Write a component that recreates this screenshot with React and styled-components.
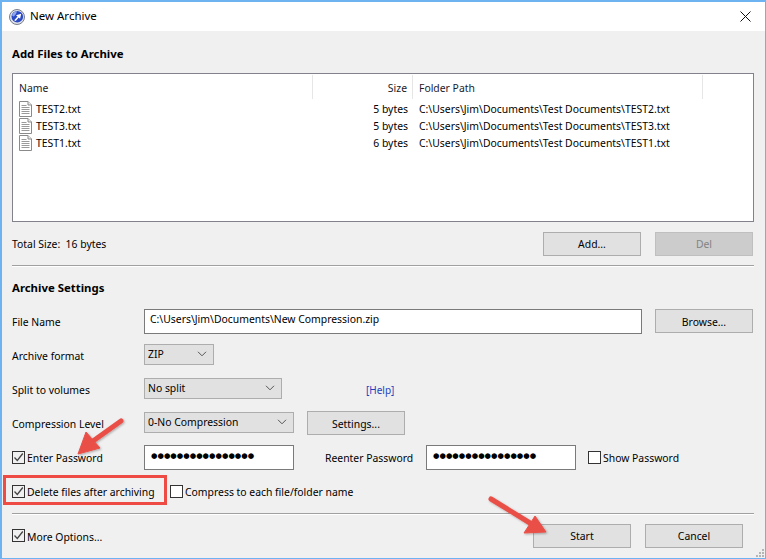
import React from 'react';
import styled, { createGlobalStyle } from 'styled-components';

const files = [
  { name: 'TEST2.txt', size: '5 bytes', path: 'C:\\Users\\Jim\\Documents\\Test Documents\\TEST2.txt' },
  { name: 'TEST3.txt', size: '5 bytes', path: 'C:\\Users\\Jim\\Documents\\Test Documents\\TEST3.txt' },
  { name: 'TEST1.txt', size: '6 bytes', path: 'C:\\Users\\Jim\\Documents\\Test Documents\\TEST1.txt' },
];

const Global = createGlobalStyle`
  html, body { margin: 0; padding: 0; background: #f0f0f0; overflow: hidden; }
  * { box-sizing: border-box; }
`;

const Window = styled.div`
  position: relative;
  width: 766px;
  height: 559px;
  display: flex;
  flex-direction: column;
  border: 1px solid #6db3f2;
  border-left-width: 2px;
  border-top-width: 2px;
  background: #f0f0f0;
  color: #000;
  font-family: "Noto Sans", "Open Sans", sans-serif;
  font-size: 10.4px;
  overflow: hidden;
`;

const TitleBar = styled.div`
  flex: none;
  height: 29px;
  background: #fff;
  display: flex;
  align-items: center;
  padding: 0 14px 0 7px;
  gap: 5px;
  font-size: 11.5px;
`;

const Title = styled.span`
  flex: 1;
  margin-top: -2px;
`;

const Body = styled.div`
  flex: 1;
  display: flex;
  flex-direction: column;
  padding: 0 11px 0 10px;
`;

const Heading = styled.div`
  height: 20px;
  display: flex;
  align-items: center;
  font-weight: 700;
  font-size: 11.4px;
  margin: ${p => p.$top}px 0 ${p => p.$bottom}px;
`;

const ListBox = styled.div`
  flex: none;
  height: 149px;
  background: #fff;
  border: 1px solid #82828c;
  padding-top: 1px;
`;

const Columns = styled.div`
  display: grid;
  grid-template-columns: 300px 100px 290px;
`;

const HeadCell = styled.div`
  height: 24px;
  display: flex;
  align-items: center;
  justify-content: ${p => (p.$right ? 'flex-end' : 'flex-start')};
  padding: 2px 5px 0 6px;
  border-right: 1px solid #e6e6e6;
  color: #1a1a2a;
`;

const Rows = styled.div`
  padding-top: 1px;
`;

const Cell = styled.div`
  height: 17px;
  display: flex;
  align-items: center;
  gap: 4px;
  justify-content: ${p => (p.$right ? 'flex-end' : 'flex-start')};
  padding: 0 5px 0 6px;
  white-space: nowrap;
`;

const TotalRow = styled.div`
  flex: none;
  height: 43px;
  display: flex;
  align-items: center;
  padding-right: 1px;
`;

const TotalLabel = styled.span`
  flex: 1;
`;

const Button = styled.div`
  flex: none;
  width: 98px;
  height: 24px;
  display: flex;
  align-items: center;
  justify-content: center;
  padding-top: 1px;
  background: ${p => (p.$disabled ? '#cccccc' : '#e1e1e1')};
  border: 1px solid ${p => (p.$disabled ? '#bfbfbf' : '#adadad')};
  color: ${p => (p.$disabled ? '#838383' : '#000')};
  margin-left: ${p => p.$gap || 0}px;
`;

const Rule = styled.div`
  flex: none;
  height: 2px;
  background: #a0a0a0;
  border-bottom: 1px solid #fff;
  margin-top: ${p => p.$top || 0}px;
`;

const Row = styled.div`
  flex: none;
  height: 34px;
  display: flex;
  align-items: center;
  white-space: nowrap;
`;

const Label = styled.span`
  flex: none;
  width: ${p => p.$w || 132}px;
  margin-left: ${p => p.$gap || 0}px;
  padding-top: 2px;
`;

const CheckCell = styled.div`
  flex: none;
  width: 132px;
`;

const TextField = styled.div`
  flex: none;
  width: ${p => p.$w}px;
  height: 25px;
  display: flex;
  align-items: center;
  padding: 0 0 4px 5px;
  background: #fff;
  border: 1px solid #7a7a7a;
`;

const Dots = styled.span`
  font-family: "DejaVu Sans", sans-serif;
  font-size: 7.4px;
  font-weight: 700;
  margin-left: 1px;
`;

const Select = styled.div`
  flex: none;
  width: ${p => p.$w}px;
  height: 21px;
  display: flex;
  align-items: center;
  justify-content: space-between;
  padding: 0 6px 1px 3px;
  background: #e1e1e1;
  border: 1px solid #adadad;
  margin-top: -2px;
`;

const HelpLink = styled.span`
  margin-left: 84px;
  color: #1f3fbf;
  font-size: 10px;
  padding-top: 2px;
`;

const CheckRow = styled.label`
  display: flex;
  align-items: center;
  gap: 2px;
  flex: none;
  width: ${p => (p.$w ? `${p.$w}px` : 'auto')};
  margin-left: ${p => p.$gap || 0}px;
`;

const CheckText = styled.span`
  padding-top: 2px;
`;

const Box = styled.span`
  flex: none;
  width: 13px;
  height: 13px;
  background: ${p => (p.$on ? '#f0f0f0' : '#fff')};
  border: 1px solid #333;
  display: flex;
  align-items: center;
  justify-content: center;
`;

const Footer = styled.div`
  flex: none;
  height: 41px;
  display: flex;
  align-items: center;
`;

const FooterLeft = styled.div`
  flex: 1;
`;

const FooterButtons = styled.div`
  display: flex;
  padding-right: 11px;
`;

const Overlay = styled.svg`
  position: absolute;
  left: -2px;
  top: -2px;
  width: 766px;
  height: 559px;
  pointer-events: none;
`;

const Grip = styled.svg`
  position: absolute;
  right: 1px;
  bottom: 1px;
  width: 9px;
  height: 9px;
`;

const Logo = () => (
  <svg width="16" height="16" viewBox="0 0 16 16">
    <circle cx="8" cy="8" r="7.500" fill="#dfe2e8" stroke="#777d8b" />
    <circle cx="8.300" cy="7.700" r="5.800" fill="#2a49c4" />
    <path d="M3 6.500a5.500 5.500 0 0 1 5-4.300L7 5 4.800 7.500z" fill="#8ea5ee" />
    <path d="M5.200 11.200 8.600 7.600 7 6.200l5.200-1.500-1.100 5.100-1.400-1.300-3 3.400z" fill="#fff" />
  </svg>
);

const CloseIcon = () => (
  <svg width="11" height="11" viewBox="0 0 11 11">
    <path d="M.5.5l10 10M10.500.5l-10 10" stroke="#111" strokeWidth="1" fill="none" />
  </svg>
);

const FileIcon = () => (
  <svg width="13" height="16" viewBox="0 0 13 16">
    <path d="M.5.5h8.500l3.500 3.500v11.500H.5z" fill="#fff" stroke="#8a8a8a" />
    <path d="M9 .5V4h3.500" fill="#eee" stroke="#8a8a8a" />
    <path d="M2.500 4.500h5M2.500 6.500h8M2.500 8.500h8M2.500 10.500h8M2.500 12.500h8" stroke="#9a9a9a" fill="none" />
  </svg>
);

const Chevron = () => (
  <svg width="10" height="6" viewBox="0 0 10 6">
    <path d="M1 .8l4 4 4-4" stroke="#555" strokeWidth="1" fill="none" />
  </svg>
);

const Check = ({ on, children, gap, w }) => (
  <CheckRow $gap={gap} $w={w}>
    <Box $on={on}>
      {on && (
        <svg width="11" height="11" viewBox="0 0 11 11">
          <path d="M1.500 5.500l2.800 3L9.800 1.500" stroke="#444" strokeWidth="1.300" fill="none" />
        </svg>
      )}
    </Box>
    <CheckText>{children}</CheckText>
  </CheckRow>
);

const App = () => (
  <Window>
    <Global />
    <TitleBar>
      <Logo />
      <Title>New Archive</Title>
      <CloseIcon />
    </TitleBar>
    <Body>
      <Heading $top={12} $bottom={10}>Add Files to Archive</Heading>
      <ListBox>
        <Columns>
          <HeadCell>Name</HeadCell>
          <HeadCell $right>Size</HeadCell>
          <HeadCell>Folder Path</HeadCell>
        </Columns>
        <Rows>
          {files.map(f => (
            <Columns key={f.name}>
              <Cell><FileIcon />{f.name}</Cell>
              <Cell $right>{f.size}</Cell>
              <Cell>{f.path}</Cell>
            </Columns>
          ))}
        </Rows>
      </ListBox>
      <TotalRow>
        <TotalLabel>Total Size:&nbsp; 16 bytes</TotalLabel>
        <Button>Add...</Button>
        <Button $gap={14} $disabled>Del</Button>
      </TotalRow>
      <Rule />
      <Heading $top={10} $bottom={7}>Archive Settings</Heading>
      <Row>
        <Label>File Name</Label>
        <TextField $w={498}>C:\Users\Jim\Documents\New Compression.zip</TextField>
        <Button $gap={13}>Browse...</Button>
      </Row>
      <Row>
        <Label>Archive format</Label>
        <Select $w={70}>ZIP<Chevron /></Select>
      </Row>
      <Row>
        <Label>Split to volumes</Label>
        <Select $w={138}>No split<Chevron /></Select>
        <HelpLink>[Help]</HelpLink>
      </Row>
      <Row>
        <Label>Compression Level</Label>
        <Select $w={150}>0-No Compression<Chevron /></Select>
        <Button $gap={13}>Settings...</Button>
      </Row>
      <Row>
        <CheckCell><Check on>Enter Password</Check></CheckCell>
        <TextField $w={150}><Dots>●●●●●●●●●●●●●●●●</Dots></TextField>
        <Label $w={101} $gap={31}>Reenter Password</Label>
        <TextField $w={150}><Dots>●●●●●●●●●●●●●●●●</Dots></TextField>
        <Check gap={12}>Show Password</Check>
      </Row>
      <Row>
        <Check on w={158}>Delete files after archiving</Check>
        <Check>Compress to each file/folder name</Check>
      </Row>
      <Rule $top={5} />
      <Footer>
        <FooterLeft><Check on>More Options...</Check></FooterLeft>
        <FooterButtons>
          <Button>Start</Button>
          <Button $gap={14}>Cancel</Button>
        </FooterButtons>
      </Footer>
    </Body>
    <Overlay viewBox="0 0 766 559">
      <defs>
        <filter id="shade" x="-20%" y="-20%" width="140%" height="140%">
          <feDropShadow dx="1" dy="1" stdDeviation="1" floodColor="#000" floodOpacity="0.3" />
        </filter>
      </defs>
      <rect x="4.500" y="476.500" width="161" height="27" fill="none" stroke="#ee4b45" strokeWidth="3" />
      <g filter="url(#shade)" fill="#ea4f47" stroke="#ea4f47" strokeLinejoin="round">
        <path d="M121 421 93 441" strokeWidth="5" strokeLinecap="round" fill="none" />
        <path d="M78 454 86 432 100 448z" strokeWidth="1" />
        <path d="M491 499 530 523" strokeWidth="5" strokeLinecap="round" fill="none" />
        <path d="M546 532 524 533 535 516z" strokeWidth="1" />
      </g>
    </Overlay>
    <Grip viewBox="0 0 9 9">
      <path d="M7 1h2v2H7zM4 4h2v2H4zM7 4h2v2H7zM1 7h2v2H1zM4 7h2v2H4zM7 7h2v2H7z" fill="#b5b5b5" />
    </Grip>
  </Window>
);

export default App;
